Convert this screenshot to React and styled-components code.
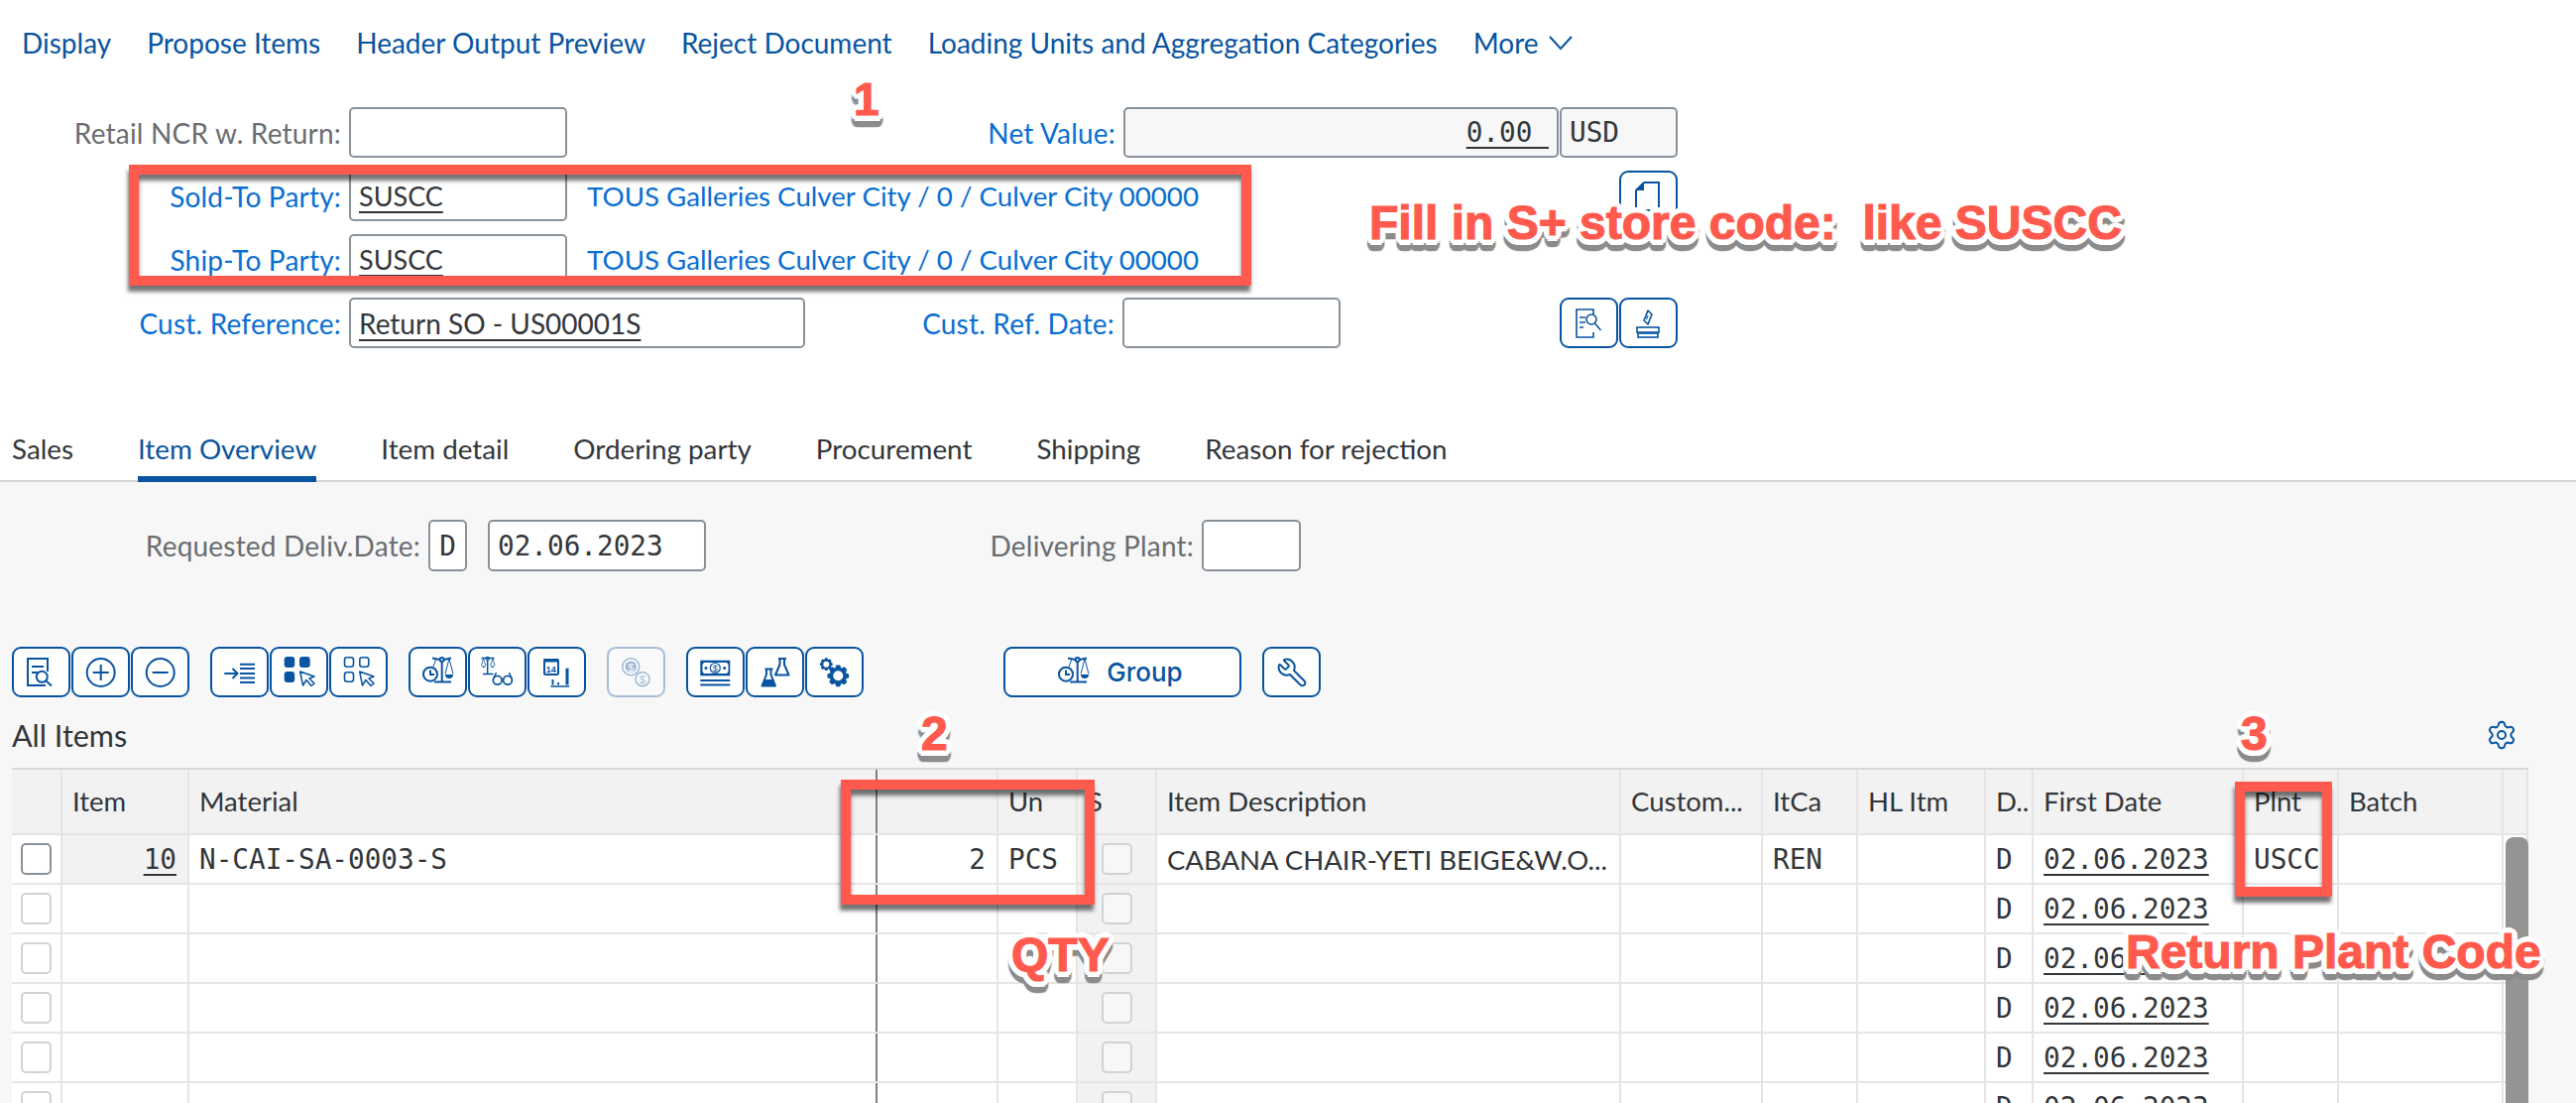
import React from "react";
import styled, { createGlobalStyle } from "styled-components";
import { Settings, Wrench } from "lucide-react";

const BLUE = "#0854a0";
const LINK = "#0a6ed1";
const INK = "#32363a";
const SANS = `"Lato", "Noto Sans", sans-serif`;
const MONO = `"DejaVu Sans Mono", monospace`;
const COLS = "51px 128px 694px 122px 80px 80px 468px 143px 96px 129px 48px 212px 96px 166px 25px";

const Global = createGlobalStyle`
  html, body { margin: 0; padding: 0; background: #fff; overflow: hidden; }
  body { font-family: ${SANS}; color: ${INK}; }
`;

const Page = styled.div`
  position: relative;
  width: 2598px;
  height: 1112px;
  overflow: hidden;
  background: #fff;
`;

const Nav = styled.nav`
  display: flex;
  align-items: center;
  gap: 36px;
  height: 86px;
  padding-left: 22px;
`;
const NavItem = styled.a`
  display: flex;
  align-items: center;
  gap: 10px;
  font-size: 28px;
  color: ${BLUE};
  white-space: nowrap;
`;

const Form = styled.section`
  display: flex;
  flex-direction: column;
  gap: 13px;
  width: 1692px;
  margin-top: 22px;
`;
const FormRow = styled.div`
  display: flex;
  justify-content: space-between;
  height: 51px;
`;
const Group = styled.div`
  display: flex;
  align-items: center;
`;
const Label = styled.label`
  width: ${(p) => p.$w || 344}px;
  margin-right: 8px;
  text-align: right;
  font-size: 28px;
  letter-spacing: 0.2px;
  white-space: nowrap;
  color: ${(p) => (p.$link ? LINK : "#6a6d70")};
`;
const Field = styled.div`
  box-sizing: border-box;
  display: flex;
  align-items: center;
  justify-content: ${(p) => (p.$end ? "flex-end" : p.$center ? "center" : "flex-start")};
  width: ${(p) => p.$w}px;
  height: ${(p) => p.$h || 51}px;
  margin-left: ${(p) => p.$ml || 0}px;
  padding: 0 ${(p) => (p.$center ? 0 : 8)}px;
  border: 2px solid #89919a;
  border-radius: 5px;
  background: ${(p) => (p.$ro ? "#f7f7f7" : "#fff")};
  font-family: ${(p) => (p.$mono ? MONO : SANS)};
  font-size: ${(p) => (p.$mono ? 27.7 : p.$size || 28)}px;
  white-space: pre;
  color: ${INK};
  text-decoration: ${(p) => (p.$u ? "underline" : "none")};
  text-underline-offset: 5px;
  text-decoration-thickness: 2px;
`;
const Desc = styled.span`
  margin-left: 20px;
  font-size: 27.7px;
  color: ${LINK};
  white-space: nowrap;
`;

const Tabs = styled.div`
  box-sizing: border-box;
  display: flex;
  gap: 65px;
  height: 66px;
  margin-top: 69px;
  padding-left: 12px;
  border-bottom: 2px solid #d6d6d6;
`;
const Tab = styled.div`
  box-sizing: border-box;
  height: 66px;
  padding-top: 16px;
  font-size: 27.8px;
  white-space: nowrap;
  color: ${(p) => (p.$active ? BLUE : INK)};
  border-bottom: ${(p) => (p.$active ? `6px solid ${BLUE}` : "none")};
`;

const Content = styled.main`
  height: 626px;
  background: #f7f7f7;
  overflow: hidden;
`;
const DateRow = styled.div`
  display: flex;
  align-items: center;
  height: 52px;
  margin-top: 38px;
`;
const Toolbar = styled.div`
  display: flex;
  height: 51px;
  margin-top: 76px;
  padding-left: 12px;
`;
const Cluster = styled.div`
  display: flex;
  gap: 1px;
  margin-right: 21px;
`;
const IconBtn = styled.button`
  box-sizing: border-box;
  display: flex;
  align-items: center;
  justify-content: center;
  width: 59px;
  height: 51px;
  padding: 0;
  border: 2px solid ${(p) => (p.$off ? "#a5bddb" : BLUE)};
  border-radius: 9px;
  background: ${(p) => (p.$off ? "#fafafa" : "#fff")};
  color: ${BLUE};
`;
const TextBtn = styled(IconBtn)`
  width: 240px;
  gap: 6px;
  padding-right: 16px;
  font-family: "Inter", sans-serif;
  font-size: 26px;
  font-weight: 500;
`;
const Spacer = styled.div`
  width: ${(p) => p.$w}px;
`;

const TitleRow = styled.div`
  box-sizing: border-box;
  display: flex;
  align-items: center;
  justify-content: space-between;
  width: 2550px;
  height: 52px;
  margin-top: 12px;
  padding: 0 11px 0 12px;
  margin-bottom: 7px;
`;
const Title = styled.h2`
  margin: 0;
  font-size: 30.5px;
  font-weight: 400;
  color: ${INK};
`;

const Table = styled.div`
  position: relative;
  width: 2538px;
  margin-left: 12px;
  border-top: 2px solid #d9d9d9;
`;
const Row = styled.div`
  display: grid;
  grid-template-columns: ${COLS};
  height: ${(p) => (p.$head ? 66 : 50)}px;
  box-sizing: border-box;
  border-bottom: 2px solid #e5e5e5;
  background: ${(p) => (p.$head ? "#f2f2f2" : "#fff")};
`;
const Cell = styled.div`
  box-sizing: border-box;
  display: flex;
  align-items: center;
  justify-content: ${(p) => (p.$right ? "flex-end" : p.$center ? "center" : "flex-start")};
  min-width: 0;
  padding: 0 ${(p) => (p.$center ? 0 : p.$right ? 11 : 8)}px ${(p) => (p.$head ? 2 : 0)}px ${(p) => (p.$center ? 0 : 10)}px;
  border-right: 2px solid ${(p) => (p.$freeze ? "#7f7f7f" : "#e5e5e5")};
  background: ${(p) => (p.$shade ? "#f2f2f2" : "transparent")};
  font-family: ${(p) => (p.$mono ? MONO : SANS)};
  font-size: ${(p) => (p.$mono ? 27.7 : 27.5)}px;
  color: ${INK};
  white-space: nowrap;
  overflow: hidden;
`;
const U = styled.span`
  text-decoration: underline;
  text-underline-offset: 5px;
  text-decoration-thickness: 2px;
`;
const Check = styled.span`
  box-sizing: border-box;
  display: block;
  width: 31px;
  height: 32px;
  border: 2px solid ${(p) => (p.$on ? "#89919a" : "#ced3d8")};
  border-radius: 5px;
  background: ${(p) => (p.$soft ? "#f7f7f7" : "#fff")};
`;
const Thumb = styled.div`
  position: absolute;
  top: 68px;
  right: 0;
  width: 23px;
  height: 400px;
  border-radius: 8px 8px 0 0;
  background: #949494;
`;

const halo = (dy, r, color, blur) => {
  const out = [];
  for (let a = 0; a < 16; a++) {
    const t = (a * Math.PI) / 8;
    out.push(`${(Math.cos(t) * r).toFixed(1)}px ${(Math.sin(t) * r + dy).toFixed(1)}px ${blur}px ${color}`);
  }
  return out.join(", ");
};
const Note = styled.div`
  position: absolute;
  left: ${(p) => p.$x}px;
  top: ${(p) => p.$y}px;
  font-family: "Liberation Sans", Arial, sans-serif;
  font-weight: 700;
  font-size: ${(p) => p.$s || 48}px;
  line-height: 1;
  white-space: pre;
  color: #ff5a4d;
  -webkit-text-stroke: 1.2px #ff5a4d;
  text-shadow: ${halo(0, 6, "#fff", 0)}, ${halo(7, 5, "#8c8c8c", 1)};
`;
const Mark = styled.div`
  position: absolute;
  box-sizing: border-box;
  left: ${(p) => p.$x}px;
  top: ${(p) => p.$y}px;
  width: ${(p) => p.$w}px;
  height: ${(p) => p.$h}px;
  border: 10px solid #ff5a4d;
  box-shadow: -1px 6px 4px rgba(0, 0, 0, 0.55), inset 0 6px 4px rgba(0, 0, 0, 0.55);
`;

const Svg = ({ children }) => (
  <svg width="59" height="51" viewBox="0 0 59 51" fill="none" stroke="currentColor" strokeWidth="2" style={{ margin: -2, flex: "none" }}>
    {children}
  </svg>
);

const gear = (cx, cy, ro, ri, n, hole) => {
  let d = "";
  const step = (Math.PI * 2) / n;
  for (let i = 0; i < n; i++) {
    const a = i * step;
    const pts = [
      [ri, a - step * 0.5],
      [ro, a - step * 0.22],
      [ro, a + step * 0.22],
      [ri, a + step * 0.5],
    ];
    pts.forEach(([r, t], k) => {
      d += `${i === 0 && k === 0 ? "M" : "L"}${(cx + r * Math.cos(t)).toFixed(2)} ${(cy + r * Math.sin(t)).toFixed(2)}`;
    });
  }
  d += `Z M${cx + hole} ${cy} a${hole} ${hole} 0 1 0 ${-2 * hole} 0 a${hole} ${hole} 0 1 0 ${2 * hole} 0Z`;
  return d;
};

const Cursor = () => (
  <path d="M30.7 25 L33.5 39 L37 33.5 L42 39.5 L45 37 L40 32 L45 30 Z" strokeWidth="1.5" strokeLinejoin="round" />
);

const ScaleClock = () => (
  <>
    <circle cx="33.7" cy="13" r="2" />
    <path d="M33.7 15V35M26 35.5H43M24 11.5L31.5 13M36 13L43 11.5" />
    <path d="M41 12L37 27.5M41 12L45 27.5M28 12L25 20" strokeWidth="1" />
    <path d="M37 28a4 4 0 0 0 8 0Z" fill="currentColor" stroke="none" />
    <circle cx="22" cy="27.7" r="7" fill="#fff" />
    <path d="M22 23.5V28H26" />
  </>
);

const icons = {
  find: (
    <Svg>
      <path d="M36 25V12H16V39H34M20 20H32M20 26H26" />
      <circle cx="30.3" cy="30.3" r="5.5" />
      <path d="M34.5 34.5L40 39.5" />
    </Svg>
  ),
  plus: (
    <Svg>
      <circle cx="29.7" cy="26" r="14" />
      <path d="M21.7 26H37.7M29.7 18V34" />
    </Svg>
  ),
  minus: (
    <Svg>
      <circle cx="29.7" cy="26" r="14" />
      <path d="M21.7 26H37.7" />
    </Svg>
  ),
  indent: (
    <Svg>
      <path d="M14.3 27H27M22.5 22L27.5 27L22.5 32M30 17.7H45M30 22H45M30 27H45M30 31.5H45M30 36H45" />
    </Svg>
  ),
  selAll: (
    <Svg>
      <g fill="currentColor" stroke="none">
        <rect x="14.7" y="10" width="10.5" height="11" rx="3" />
        <rect x="30" y="10" width="10.7" height="11" rx="3" />
        <rect x="14.7" y="25" width="10.5" height="11" rx="3" />
      </g>
      <Cursor />
    </Svg>
  ),
  selNone: (
    <Svg>
      <g strokeWidth="1.6">
        <rect x="15.5" y="10.8" width="9" height="9.5" rx="2.5" />
        <rect x="30.8" y="10.8" width="9" height="9.5" rx="2.5" />
        <rect x="15.5" y="25.8" width="9" height="9.5" rx="2.5" />
      </g>
      <Cursor />
    </Svg>
  ),
  scaleClock: (
    <Svg>
      <ScaleClock />
    </Svg>
  ),
  scaleGlasses: (
    <Svg>
      <circle cx="19.7" cy="12" r="1.5" strokeWidth="1.3" />
      <path d="M19.7 13.5V27M15 27.5H25.5M13.5 11.5H26.5" strokeWidth="1.5" />
      <path d="M15.5 12L13.5 19M15.5 12L18 19M25 12L22.5 19M25 12L27 19" strokeWidth="0.8" />
      <path d="M13.5 19.5a2.5 2.5 0 0 0 4.5 0ZM22.5 19.5a2.5 2.5 0 0 0 4.5 0Z" fill="currentColor" stroke="none" />
      <circle cx="29.7" cy="33.7" r="4.4" strokeWidth="1.7" />
      <circle cx="40" cy="33.7" r="4.4" strokeWidth="1.7" />
      <path d="M34 33H35.7M25.5 32.5L28.5 26M44.2 32.5L41.5 26" strokeWidth="1.4" />
    </Svg>
  ),
  calendar: (
    <Svg>
      <rect x="17" y="13" width="14" height="15" rx="1.5" />
      <rect x="16.3" y="12" width="14.6" height="3.5" fill="currentColor" stroke="none" />
      <text x="23.8" y="25.5" textAnchor="middle" fontFamily="Liberation Sans" fontWeight="700" fontSize="9" fill="currentColor" stroke="none">14</text>
      <path d="M23.3 40H42.3" strokeWidth="1.5" />
      <g fill="currentColor" stroke="none">
        <rect x="24.5" y="33" width="2" height="5.5" />
        <rect x="30" y="36" width="2" height="2.5" />
        <rect x="38.5" y="21.7" width="3" height="16.8" />
      </g>
    </Svg>
  ),
  coins: (
    <Svg>
      <g opacity="0.38">
        <circle cx="24.3" cy="20.3" r="8.5" strokeWidth="1.5" />
        <circle cx="24.3" cy="20.3" r="5.7" fill="currentColor" stroke="none" />
        <text x="24.3" y="24.5" textAnchor="middle" fontFamily="Liberation Sans" fontSize="11" fill="#fff" stroke="none">$</text>
        <circle cx="36" cy="32.7" r="7" strokeWidth="1.5" fill="#fff" />
        <text x="36" y="36.7" textAnchor="middle" fontFamily="Liberation Sans" fontSize="11" fill="currentColor" stroke="none">$</text>
      </g>
    </Svg>
  ),
  money: (
    <Svg>
      <rect x="14.3" y="13.7" width="30" height="15.6" fill="currentColor" stroke="none" />
      <path d="M18 16H41L42.5 18V25L41 27H18L16.5 25V18Z" fill="#fff" stroke="none" />
      <circle cx="29.3" cy="21.5" r="5" strokeWidth="1.2" />
      <text x="29.3" y="25" textAnchor="middle" fontFamily="Liberation Sans" fontSize="9" fill="currentColor" stroke="none">$</text>
      <circle cx="20" cy="21.5" r="1.5" fill="currentColor" stroke="none" />
      <circle cx="38.7" cy="21.5" r="1.5" fill="currentColor" stroke="none" />
      <path d="M14.3 34H44.3M14.3 38.5H44.3" />
    </Svg>
  ),
  flasks: (
    <Svg>
      <path d="M19.5 22.5H27.5M21 22.5V28L16.5 39.5H30L25.5 28V22.5" strokeLinejoin="round" />
      <path d="M19 33H27.5L30 39.5H16.5Z" fill="currentColor" stroke="none" />
      <path d="M33 12H41M34.5 12V18L30 28.5H43.5L39 18V12" strokeLinejoin="round" />
    </Svg>
  ),
  gears: (
    <Svg>
      <path d={gear(33.3, 29.3, 11, 8.2, 8, 5)} fill="currentColor" stroke="none" fillRule="evenodd" />
      <path d={gear(21.3, 17.7, 6.5, 5, 8, 3)} fill="currentColor" stroke="none" fillRule="evenodd" />
    </Svg>
  ),
  docFold: (
    <Svg>
      <path d="M17 20L25 12H40V40H17Z" />
      <path d="M17 20L25 12V20Z" fill="currentColor" stroke="none" />
    </Svg>
  ),
  docFind: (
    <Svg>
      <path d="M34 17V12H17V40H34V35M20 20H26M20 25H26M20 30H24" strokeWidth="1.6" />
      <circle cx="32" cy="22" r="5" strokeWidth="1.6" />
      <path d="M35.5 26L41.5 33" strokeWidth="1.6" />
    </Svg>
  ),
  stamp: (
    <Svg>
      <path d="M29 13L33 17L29 27L25 23Z" strokeWidth="1.6" strokeLinejoin="round" />
      <path d="M29 18L27.5 22" strokeWidth="1.2" />
      <rect x="18" y="30" width="22" height="5" strokeWidth="1.6" />
      <rect x="19" y="36" width="20" height="4" strokeWidth="1.6" />
    </Svg>
  ),
};

const head = [
  ["", {}], ["Item", {}], ["Material", { $freeze: true }], ["", {}], ["Un", {}], ["S", {}],
  ["Item Description", {}], ["Custom...", {}], ["ItCa", {}], ["HL Itm", {}], ["D..", {}],
  ["First Date", {}], ["Plnt", {}], ["Batch", {}], ["", {}],
];

const ItemRow = ({ first }) => (
  <Row>
    <Cell $center><Check $on={first} /></Cell>
    <Cell $right $mono $shade={first}>{first && <U>10</U>}</Cell>
    <Cell $mono $freeze>{first && "N-CAI-SA-0003-S"}</Cell>
    <Cell $right $mono>{first && "2"}</Cell>
    <Cell $mono>{first && "PCS"}</Cell>
    <Cell $center $shade><Check $soft /></Cell>
    <Cell>{first && "CABANA CHAIR-YETI BEIGE&W.O..."}</Cell>
    <Cell />
    <Cell $mono>{first && "REN"}</Cell>
    <Cell />
    <Cell $mono>D</Cell>
    <Cell $mono><U>02.06.2023</U></Cell>
    <Cell $mono>{first && "USCC"}</Cell>
    <Cell />
    <Cell />
  </Row>
);

export default function App() {
  return (
    <Page>
      <Global />
      <Nav>
        <NavItem>Display</NavItem>
        <NavItem>Propose Items</NavItem>
        <NavItem>Header Output Preview</NavItem>
        <NavItem>Reject Document</NavItem>
        <NavItem>Loading Units and Aggregation Categories</NavItem>
        <NavItem>
          More
          <svg width="24" height="16" viewBox="0 0 24 16" fill="none" stroke="currentColor" strokeWidth="2">
            <path d="M1 2L12 14L23 2" />
          </svg>
        </NavItem>
      </Nav>

      <Form>
        <FormRow>
          <Group>
            <Label>Retail NCR w. Return:</Label>
            <Field $w={220} />
          </Group>
          <Group>
            <Label $link $w={300}>Net Value:</Label>
            <Field $w={439} $ro $mono $end $u>{"0.00 "}</Field>
            <Field $w={119} $ml={1} $ro $mono>USD</Field>
          </Group>
        </FormRow>
        <FormRow>
          <Group>
            <Label $link>Sold-To Party:</Label>
            <Field $w={220} $u $size={27}>SUSCC</Field>
            <Desc>TOUS Galleries Culver City / 0 / Culver City 00000</Desc>
          </Group>
          <Group>
            <IconBtn>{icons.docFold}</IconBtn>
          </Group>
        </FormRow>
        <FormRow>
          <Group>
            <Label $link>Ship-To Party:</Label>
            <Field $w={220} $u $size={27}>SUSCC</Field>
            <Desc>TOUS Galleries Culver City / 0 / Culver City 00000</Desc>
          </Group>
        </FormRow>
        <FormRow>
          <Group>
            <Label $link>Cust. Reference:</Label>
            <Field $w={460} $u>Return SO - US00001S</Field>
          </Group>
          <Group>
            <Label $link $w={300}>Cust. Ref. Date:</Label>
            <Field $w={220} />
            <Spacer $w={221} />
            <IconBtn>{icons.docFind}</IconBtn>
            <Spacer $w={1} />
            <IconBtn>{icons.stamp}</IconBtn>
          </Group>
        </FormRow>
      </Form>

      <Tabs>
        <Tab>Sales</Tab>
        <Tab $active>Item Overview</Tab>
        <Tab>Item detail</Tab>
        <Tab>Ordering party</Tab>
        <Tab>Procurement</Tab>
        <Tab>Shipping</Tab>
        <Tab>Reason for rejection</Tab>
      </Tabs>

      <Content>
        <DateRow>
          <Label $w={424}>Requested Deliv.Date:</Label>
          <Field $w={39} $h={52} $mono $center>D</Field>
          <Field $w={220} $h={52} $ml={21} $mono>02.06.2023</Field>
          <Label $w={492}>Delivering Plant:</Label>
          <Field $w={100} $h={52} />
        </DateRow>

        <Toolbar>
          <Cluster>
            <IconBtn>{icons.find}</IconBtn>
            <IconBtn>{icons.plus}</IconBtn>
            <IconBtn>{icons.minus}</IconBtn>
          </Cluster>
          <Cluster>
            <IconBtn>{icons.indent}</IconBtn>
            <IconBtn>{icons.selAll}</IconBtn>
            <IconBtn>{icons.selNone}</IconBtn>
          </Cluster>
          <Cluster>
            <IconBtn>{icons.scaleClock}</IconBtn>
            <IconBtn>{icons.scaleGlasses}</IconBtn>
            <IconBtn>{icons.calendar}</IconBtn>
          </Cluster>
          <Cluster>
            <IconBtn $off>{icons.coins}</IconBtn>
          </Cluster>
          <Cluster>
            <IconBtn>{icons.money}</IconBtn>
            <IconBtn>{icons.flasks}</IconBtn>
            <IconBtn>{icons.gears}</IconBtn>
          </Cluster>
          <Spacer $w={120} />
          <Cluster>
            <TextBtn>{icons.scaleClock}Group</TextBtn>
          </Cluster>
          <Cluster>
            <IconBtn><Wrench size={32} strokeWidth={1.5} style={{ transform: "scaleX(-1)" }} /></IconBtn>
          </Cluster>
        </Toolbar>

        <TitleRow>
          <Title>All Items</Title>
          <Settings size={32} strokeWidth={1.5} color={BLUE} />
        </TitleRow>

        <Table>
          <Row $head>
            {head.map(([t, p], i) => (
              <Cell key={i} $head {...p}>{t}</Cell>
            ))}
          </Row>
          <ItemRow first />
          <ItemRow />
          <ItemRow />
          <ItemRow />
          <ItemRow />
          <ItemRow />
          <Thumb />
        </Table>
      </Content>

      <Mark $x={130} $y={166} $w={1132} $h={122} />
      <Mark $x={848} $y={786} $w={256} $h={126} />
      <Mark $x={2254} $y={788} $w={98} $h={116} />
      <Note $x={861} $y={77} $s={46}>1</Note>
      <Note $x={1381} $y={201}>{"Fill in S+ store code:  like SUSCC"}</Note>
      <Note $x={929} $y={716}>2</Note>
      <Note $x={2260} $y={716}>3</Note>
      <Note $x={1020} $y={939}>QTY</Note>
      <Note $x={2144} $y={936}>Return Plant Code</Note>
    </Page>
  );
}
